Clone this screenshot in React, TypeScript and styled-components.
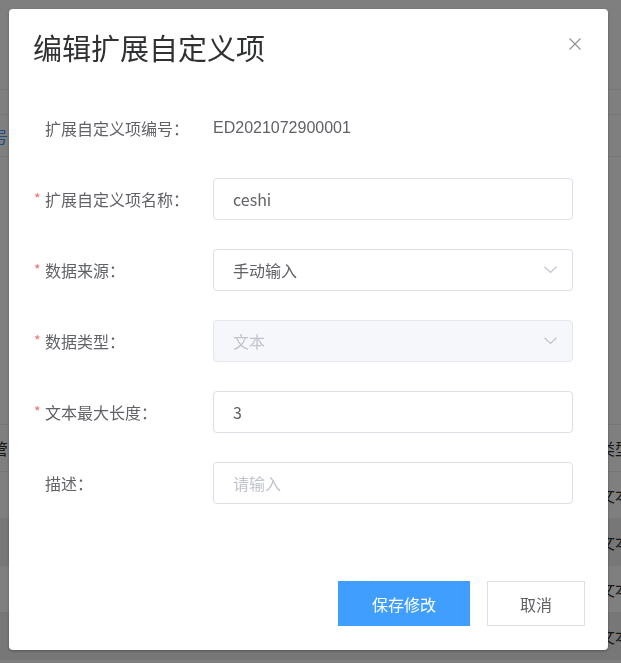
import React from 'react'
import styled, { createGlobalStyle } from 'styled-components'

const GlobalStyle = createGlobalStyle`
  html, body {
    margin: 0;
    padding: 0;
    overflow: hidden;
    font-family: "Liberation Sans", "Noto Sans CJK SC", sans-serif;
  }
  * { box-sizing: border-box; }
`

const Page = styled.main`
  width: 621px;
  height: 663px;
  background: #ffffff;
  display: flex;
  flex-direction: column;
  overflow: hidden;
`

const PageRow = styled.div<{ $h: number; $line?: boolean; $bg?: string }>`
  height: ${(p) => p.$h}px;
  flex-shrink: 0;
  border-bottom: ${(p) => (p.$line ? '1px solid #ebeef5' : 'none')};
  background: ${(p) => p.$bg ?? '#ffffff'};
  display: flex;
  align-items: center;
  justify-content: space-between;
  font-size: 16px;
  color: #303133;
  white-space: nowrap;
`

const EdgeText = styled.span<{ $side: 'left' | 'right'; $link?: boolean }>`
  margin-left: ${(p) => (p.$side === 'left' ? '-8px' : '0')};
  margin-right: ${(p) => (p.$side === 'right' ? '-10px' : '0')};
  color: ${(p) => (p.$link ? '#409eff' : '#303133')};
`

const Overlay = styled.div`
  position: fixed;
  inset: 0;
  background: rgba(0, 0, 0, 0.5);
  display: flex;
  align-items: flex-start;
  padding: 9px;
`

const Modal = styled.section`
  width: 599px;
  height: 641px;
  background: #ffffff;
  border-radius: 4px;
  box-shadow: 0 1px 3px rgba(0, 0, 0, 0.3);
  display: flex;
  flex-direction: column;
`

const Header = styled.header`
  display: flex;
  align-items: center;
  justify-content: space-between;
  padding: 18px 27px 0 24px;
  height: 58px;
`

const Title = styled.h2`
  margin: 0;
  font-size: 29px;
  line-height: 40px;
  font-weight: normal;
  color: #303133;
  font-family: "Noto Sans CJK SC", sans-serif;
`

const Close = styled.button`
  border: none;
  background: none;
  padding: 0;
  width: 12px;
  height: 12px;
  margin-top: -6px;
  display: flex;
  cursor: pointer;
`

const Form = styled.div`
  display: flex;
  flex-direction: column;
  gap: 29px;
  padding: 40px 0 0 25px;
`

const Row = styled.div`
  display: flex;
  align-items: center;
  height: 42px;
`

const Label = styled.label<{ $required?: boolean }>`
  width: 179px;
  flex-shrink: 0;
  display: flex;
  align-items: center;
  font-size: 16px;
  color: #606266;
  font-family: "Noto Sans CJK SC", sans-serif;
  &::before {
    content: '*';
    width: 11px;
    color: #f56c6c;
    font-size: 14px;
    margin-top: -3px;
    visibility: ${(p) => (p.$required ? 'visible' : 'hidden')};
  }
`

const Value = styled.span`
  font-size: 16px;
  color: #606266;
`

const Field = styled.div<{ $disabled?: boolean }>`
  width: 360px;
  height: 42px;
  border: 1px solid ${(p) => (p.$disabled ? '#e4e7ed' : '#dcdfe6')};
  background: ${(p) => (p.$disabled ? '#f5f7fa' : '#ffffff')};
  border-radius: 4px;
  display: flex;
  align-items: center;
  justify-content: space-between;
  padding: 0 15px 0 19px;
`

const FieldText = styled.span<{ $muted?: boolean }>`
  font-size: 16px;
  color: ${(p) => (p.$muted ? '#c0c4cc' : '#606266')};
  font-family: "Noto Sans CJK SC", sans-serif;
`

const Footer = styled.footer`
  margin-top: auto;
  display: flex;
  justify-content: flex-end;
  gap: 17px;
  padding: 0 23px 24px 0;
`

const Button = styled.button<{ $primary?: boolean }>`
  height: 45px;
  width: ${(p) => (p.$primary ? '132px' : '98px')};
  border: 1px solid ${(p) => (p.$primary ? '#409eff' : '#dcdfe6')};
  background: ${(p) => (p.$primary ? '#409eff' : '#ffffff')};
  color: ${(p) => (p.$primary ? '#ffffff' : '#606266')};
  font-size: 16px;
  font-family: "Noto Sans CJK SC", sans-serif;
  border-radius: 0;
  cursor: pointer;
`

const Chevron = () => (
  <svg width="13" height="8" viewBox="0 0 13 8">
    <polyline points="0.5,0.8 6.5,6.5 12.5,0.8" fill="none" stroke="#c0c4cc" strokeWidth="1.2" />
  </svg>
)

const CloseIcon = () => (
  <svg width="12" height="12" viewBox="0 0 12 12">
    <path d="M0.5 0.5 L11.5 11.5 M11.5 0.5 L0.5 11.5" stroke="#909399" strokeWidth="1.2" />
  </svg>
)

const rows = ['#ffffff', '#eeeeee', '#ffffff', '#eeeeee']

export default function App() {
  return (
    <>
      <GlobalStyle />
      <Page>
        <PageRow $h={90} $line />
        <PageRow $h={25} $line />
        <PageRow $h={42} $line>
          <EdgeText $side="left" $link>号</EdgeText>
        </PageRow>
        <PageRow $h={29} />
        <PageRow $h={42} />
        <PageRow $h={197} $line />
        <PageRow $h={47} $line>
          <EdgeText $side="left">管</EdgeText>
          <EdgeText $side="right">类型</EdgeText>
        </PageRow>
        {rows.map((bg, i) => (
          <PageRow key={i} $h={47} $line $bg={bg}>
            <span />
            <EdgeText $side="right">文本</EdgeText>
          </PageRow>
        ))}
      </Page>
      <Overlay>
        <Modal>
          <Header>
            <Title>编辑扩展自定义项</Title>
            <Close aria-label="关闭">
              <CloseIcon />
            </Close>
          </Header>
          <Form>
            <Row>
              <Label>扩展自定义项编号：</Label>
              <Value>ED2021072900001</Value>
            </Row>
            <Row>
              <Label $required>扩展自定义项名称：</Label>
              <Field>
                <FieldText>ceshi</FieldText>
              </Field>
            </Row>
            <Row>
              <Label $required>数据来源：</Label>
              <Field>
                <FieldText>手动输入</FieldText>
                <Chevron />
              </Field>
            </Row>
            <Row>
              <Label $required>数据类型：</Label>
              <Field $disabled>
                <FieldText $muted>文本</FieldText>
                <Chevron />
              </Field>
            </Row>
            <Row>
              <Label $required>文本最大长度：</Label>
              <Field>
                <FieldText>3</FieldText>
              </Field>
            </Row>
            <Row>
              <Label>描述：</Label>
              <Field>
                <FieldText $muted>请输入</FieldText>
              </Field>
            </Row>
          </Form>
          <Footer>
            <Button $primary>保存修改</Button>
            <Button>取消</Button>
          </Footer>
        </Modal>
      </Overlay>
    </>
  )
}
